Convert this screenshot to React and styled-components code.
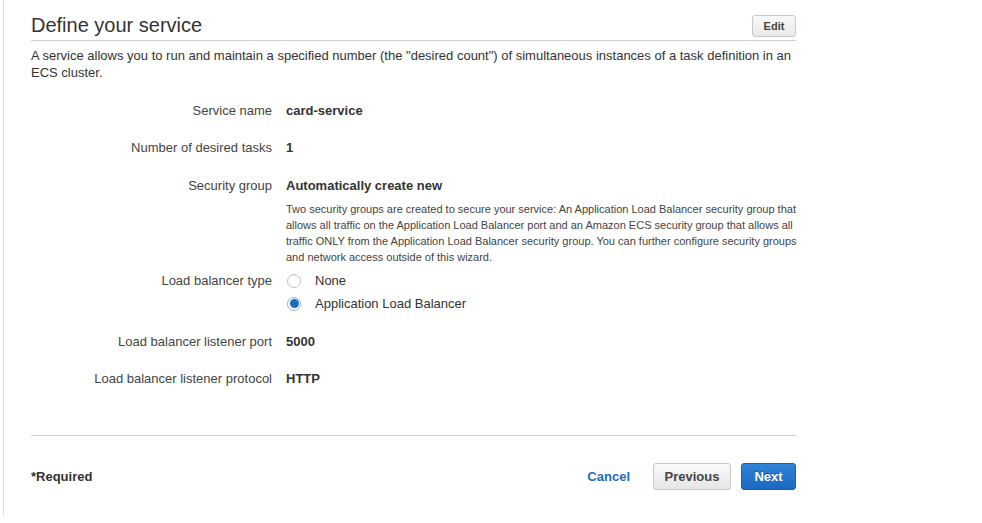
import React from "react";
import styled, { createGlobalStyle } from "styled-components";

const Global = createGlobalStyle`
  html, body { margin: 0; padding: 0; background: #fff; }
  body { font-family: "Liberation Sans", Arial, Helvetica, sans-serif; color: #333; }
  * { box-sizing: border-box; }
`;

const Page = styled.div`
  padding-left: 3px;
  height: 523px;
`;

const Panel = styled.div`
  border-left: 1px solid #dcdcdc;
  height: 516px;
  padding-left: 27px;
`;

const Content = styled.div`
  width: 765px;
`;

const Header = styled.div`
  display: flex;
  justify-content: space-between;
  align-items: flex-end;
  border-bottom: 1px solid #cfcfcf;
  padding-top: 10px;
  height: 41px;
  padding-bottom: 3px;
`;

const Title = styled.h2`
  margin: 0;
  font-size: 20px;
  line-height: 24px;
  font-weight: 400;
  color: #333;
`;

const SmallButton = styled.button`
  font-family: inherit;
  font-size: 11px;
  font-weight: 700;
  color: #444;
  height: 22px;
  width: 44px;
  padding: 0;
  border: 1px solid #c8c8c8;
  border-radius: 3px;
  background: linear-gradient(#fafafa, #e8e8e8);
`;

const Description = styled.p`
  margin: 6px 0 0 0;
  font-size: 13px;
  line-height: 17px;
  color: #333;
`;

const Rows = styled.div`
  margin-top: 21px;
  display: flex;
  flex-direction: column;
`;

const Row = styled.div`
  display: grid;
  grid-template-columns: 241px 1fr;
  column-gap: 14px;
  font-size: 13px;
  line-height: 17px;
  margin-bottom: ${(p) => p.$mb}px;
`;

const Label = styled.div`
  text-align: right;
  color: #444;
`;

const Value = styled.div`
  font-weight: 700;
  color: #333;
`;

const Help = styled.p`
  margin: 7px 0 0 0;
  font-size: 11px;
  line-height: 16px;
  color: #444;
  width: 512px;
`;

const RadioList = styled.div`
  display: flex;
  flex-direction: column;
  gap: 6px;
`;

const RadioItem = styled.label`
  display: flex;
  align-items: center;
  gap: 14px;
  padding-left: 1px;
  color: #333;
`;

const RadioDot = styled.span`
  width: 14px;
  height: 14px;
  border-radius: 50%;
  border: 1px solid ${(p) => (p.$checked ? "#9fb3c8" : "#c4c4c4")};
  background: #fff;
  display: flex;
  align-items: center;
  justify-content: center;
  box-shadow: inset 0 1px 1px rgba(0, 0, 0, 0.06);
  &::after {
    content: "";
    width: 9px;
    height: 9px;
    border-radius: 50%;
    background: ${(p) => (p.$checked ? "#1a6dc7" : "transparent")};
  }
`;

const Divider = styled.div`
  margin-top: 27.5px;
  border-top: 1px solid #cfcfcf;
`;

const Footer = styled.div`
  display: flex;
  align-items: center;
  padding-top: 27px;
`;

const Required = styled.div`
  font-size: 13px;
  font-weight: 700;
  color: #333;
  flex: 1;
`;

const LinkButton = styled.button`
  font-family: inherit;
  font-size: 13px;
  font-weight: 700;
  color: #1f6abf;
  background: none;
  border: none;
  padding: 0;
  margin-right: 23px;
`;

const Button = styled.button`
  font-family: inherit;
  font-size: 13px;
  font-weight: 700;
  height: 27px;
  padding: 0;
  width: ${(p) => p.$w}px;
  border-radius: 3px;
  margin-left: ${(p) => p.$ml || 0}px;
  ${(p) =>
    p.$primary
      ? `
    color: #fff;
    border: 1px solid #1c5fa8;
    background: linear-gradient(#2f84d8, #1b68c1);
    text-shadow: 0 -1px 0 rgba(0,0,0,0.35);
  `
      : `
    color: #444;
    border: 1px solid #c8c8c8;
    background: linear-gradient(#fafafa, #e6e6e6);
  `}
`;

export default function App() {
  return (
    <>
      <Global />
      <Page>
        <Panel>
          <Content>
            <Header>
              <Title>Define your service</Title>
              <SmallButton>Edit</SmallButton>
            </Header>
            <Description>
              A service allows you to run and maintain a specified number (the "desired count") of
              simultaneous instances of a task definition in an ECS cluster.
            </Description>
            <Rows>
              <Row $mb={20}>
                <Label>Service name</Label>
                <Value>card-service</Value>
              </Row>
              <Row $mb={21}>
                <Label>Number of desired tasks</Label>
                <Value>1</Value>
              </Row>
              <Row $mb={7}>
                <Label>Security group</Label>
                <div>
                  <Value>Automatically create new</Value>
                  <Help>
                    Two security groups are created to secure your service: An Application Load
                    Balancer security group that allows all traffic on the Application Load Balancer
                    port and an Amazon ECS security group that allows all traffic ONLY from the
                    Application Load Balancer security group. You can further configure security
                    groups and network access outside of this wizard.
                  </Help>
                </div>
              </Row>
              <Row $mb={21}>
                <Label>Load balancer type</Label>
                <RadioList>
                  <RadioItem>
                    <RadioDot />
                    None
                  </RadioItem>
                  <RadioItem>
                    <RadioDot $checked />
                    Application Load Balancer
                  </RadioItem>
                </RadioList>
              </Row>
              <Row $mb={20}>
                <Label>Load balancer listener port</Label>
                <Value>5000</Value>
              </Row>
              <Row $mb={20}>
                <Label>Load balancer listener protocol</Label>
                <Value>HTTP</Value>
              </Row>
            </Rows>
            <Divider />
            <Footer>
              <Required>*Required</Required>
              <LinkButton>Cancel</LinkButton>
              <Button $w={78}>Previous</Button>
              <Button $w={55} $ml={10} $primary>
                Next
              </Button>
            </Footer>
          </Content>
        </Panel>
      </Page>
    </>
  );
}
